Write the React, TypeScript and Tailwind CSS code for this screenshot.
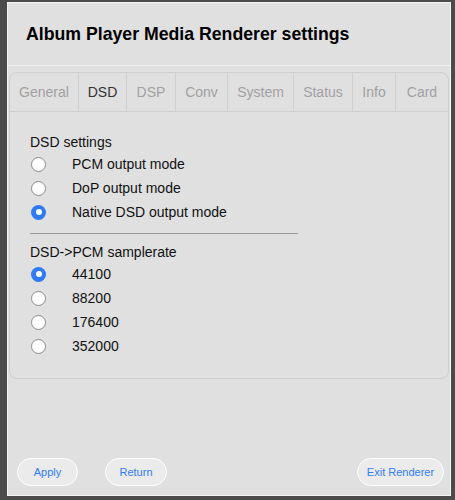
const tabs = [
  { name: 'General', w: 'w-[68px]' },
  { name: 'DSD', w: 'w-[48px]' },
  { name: 'DSP', w: 'w-[49px]' },
  { name: 'Conv', w: 'w-[52px]' },
  { name: 'System', w: 'w-[66px]' },
  { name: 'Status', w: 'w-[59px]' },
  { name: 'Info', w: 'w-[43px]' },
  { name: 'Card', w: 'flex-1' },
];

function Radio({ label, checked }: { label: string; checked?: boolean }) {
  return (
    <div className="flex items-center h-[24px]">
      {checked ? (
        <span className="w-[15px] h-[15px] rounded-full bg-[#2f7bf5] flex items-center justify-center ml-[1px]">
          <span className="w-[6px] h-[6px] rounded-full bg-white" />
        </span>
      ) : (
        <span className="w-[15px] h-[15px] rounded-full bg-white border border-[#8a8a8a] ml-[1px]" />
      )}
      <span className="ml-[26px] text-[14px] text-[#111]">{label}</span>
    </div>
  );
}

export default function App() {
  return (
    <div
      className="w-[455px] h-[500px] bg-[#4b4b4b] pt-[2px] pl-[7px] pr-[4px] pb-[4px]"
      style={{ fontFamily: '"Liberation Sans", Arial, sans-serif' }}
    >
      <div className="h-full bg-[#e0e0e0] border border-[#f4f4f4] flex flex-col">
        {/* header */}
        <div className="h-[63px] flex items-center pl-[18px] border-b border-[#f2f2f2]">
          <h1 className="text-[17.7px] font-bold text-black">Album Player Media Renderer settings</h1>
        </div>

        {/* tab card */}
        <div className="mx-[1px] mt-[6px] border border-[#cfcfcf] rounded-[8px]">
          <div className="flex h-[39px] border-b border-[#cfcfcf]">
            {tabs.map((t, i) => (
              <div
                key={t.name}
                className={`${t.w} flex items-center justify-center text-[14px] ${
                  i > 0 ? 'border-l border-[#cfcfcf]' : ''
                } ${t.name === 'DSD' ? 'text-[#333]' : 'text-[#a0a0a0]'}`}
              >
                {t.name}
              </div>
            ))}
          </div>

          <div className="pl-[20px] pt-[20px] pb-[20px]">
            <div className="h-[20px] flex items-center text-[14px] text-[#111]">DSD settings</div>
            <Radio label="PCM output mode" />
            <Radio label="DoP output mode" />
            <Radio label="Native DSD output mode" checked />
            <div className="w-[268px] border-t border-[#9a9a9a] mt-[9px] mb-[8px]" />
            <div className="h-[20px] flex items-center text-[14px] text-[#111]">DSD-&gt;PCM samplerate</div>
            <Radio label="44100" checked />
            <Radio label="88200" />
            <Radio label="176400" />
            <Radio label="352000" />
          </div>
        </div>

        <div className="flex-1" />

        {/* buttons */}
        <div className="flex items-center pl-[9px] pr-[6px] pb-[9px]">
          <button className="w-[61px] h-[28px] rounded-full bg-[#ebebeb] border-[1.5px] border-white text-[#2f7bf5] text-[11px]">
            Apply
          </button>
          <button className="ml-[27px] w-[62px] h-[28px] rounded-full bg-[#ebebeb] border-[1.5px] border-white text-[#2f7bf5] text-[11px]">
            Return
          </button>
          <div className="flex-1" />
          <button className="w-[87px] h-[28px] rounded-full bg-[#ebebeb] border-[1.5px] border-white text-[#2f7bf5] text-[11px]">
            Exit Renderer
          </button>
        </div>
      </div>
    </div>
  );
}
